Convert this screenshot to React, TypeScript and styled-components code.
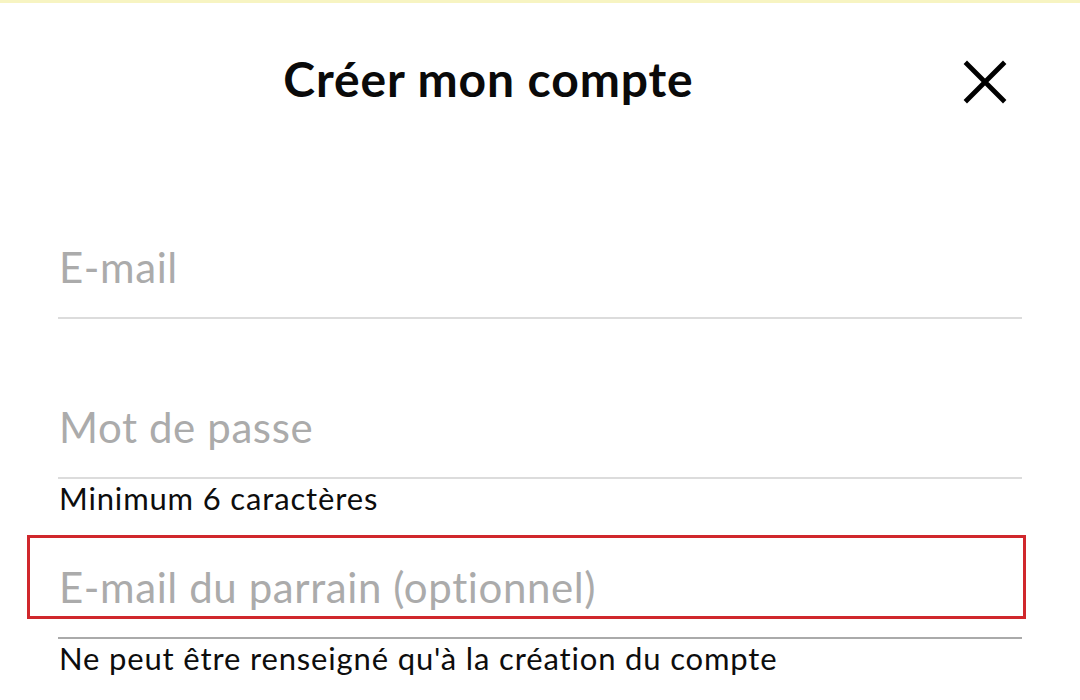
import { createGlobalStyle, styled } from "styled-components";

const GlobalStyle = createGlobalStyle`
  html, body {
    margin: 0;
    padding: 0;
    background: #fff;
  }
  body {
    font-family: "Lato", "Noto Sans", sans-serif;
    color: #111;
  }
`;

const Page = styled.div`
  width: 1080px;
  height: 700px;
  overflow: hidden;
  box-sizing: border-box;
  border-top: 3px solid #f7f4c2;
  background: #fff;
`;

const Header = styled.header`
  height: 156px;
  box-sizing: border-box;
  padding: 48px 63px 0 24px;
  display: flex;
  align-items: flex-start;
`;

const Title = styled.h1`
  flex: 1;
  margin: 0;
  text-align: center;
  font-size: 48px;
  line-height: 56px;
  font-weight: 700;
  letter-spacing: 0.9px;
  color: #0a0a0a;
`;

const CloseButton = styled.button`
  width: 64px;
  height: 56px;
  margin-top: 3px;
  padding: 0;
  border: none;
  background: none;
  display: flex;
  align-items: center;
  justify-content: center;
  cursor: pointer;
`;

const Form = styled.form`
  padding: 0 58px;
  display: flex;
  flex-direction: column;
`;

const Field = styled.div`
  position: relative;
  height: 160px;
  padding-top: 83px;
  box-sizing: border-box;
`;

const Input = styled.input<{ $active?: boolean }>`
  display: block;
  width: 100%;
  box-sizing: border-box;
  height: 77px;
  padding: 0 0 25px 1px;
  border: none;
  border-bottom: 2px solid ${(p) => (p.$active ? "#aaaaaa" : "#dcdcdc")};
  outline: none;
  background: transparent;
  font-family: "Lato", "Noto Sans", sans-serif;
  font-size: 42px;
  line-height: 50px;
  letter-spacing: 0.6px;
  color: #111;

  &::placeholder {
    color: #ababab;
  }
`;

const Helper = styled.p`
  margin: 2px 0 0 1px;
  font-size: 31px;
  line-height: 34px;
  letter-spacing: 0.85px;
  color: #0d0d0d;
`;

const Highlight = styled.div`
  position: absolute;
  top: 56px;
  left: -31px;
  right: -4px;
  height: 84px;
  box-sizing: border-box;
  border: 3px solid #d0272c;
  pointer-events: none;
`;

const CloseIcon = () => (
  <svg width="44" height="44" viewBox="0 0 44 44" fill="none">
    <path d="M4 4 L40 40 M40 4 L4 40" stroke="#000" strokeWidth="4.8" strokeLinecap="square" />
  </svg>
);

const App = () => {
  return (
    <>
      <GlobalStyle />
      <Page>
        <Header>
          <Title>Créer mon compte</Title>
          <CloseButton type="button" aria-label="Fermer">
            <CloseIcon />
          </CloseButton>
        </Header>
        <Form onSubmit={(e) => e.preventDefault()}>
          <Field>
            <Input type="email" placeholder="E-mail" />
          </Field>
          <Field>
            <Input type="password" placeholder="Mot de passe" />
            <Helper>Minimum 6 caractères</Helper>
          </Field>
          <Field>
            <Input type="email" placeholder="E-mail du parrain (optionnel)" $active />
            <Helper>Ne peut être renseigné qu'à la création du compte</Helper>
            <Highlight />
          </Field>
        </Form>
      </Page>
    </>
  );
};

export default App;
